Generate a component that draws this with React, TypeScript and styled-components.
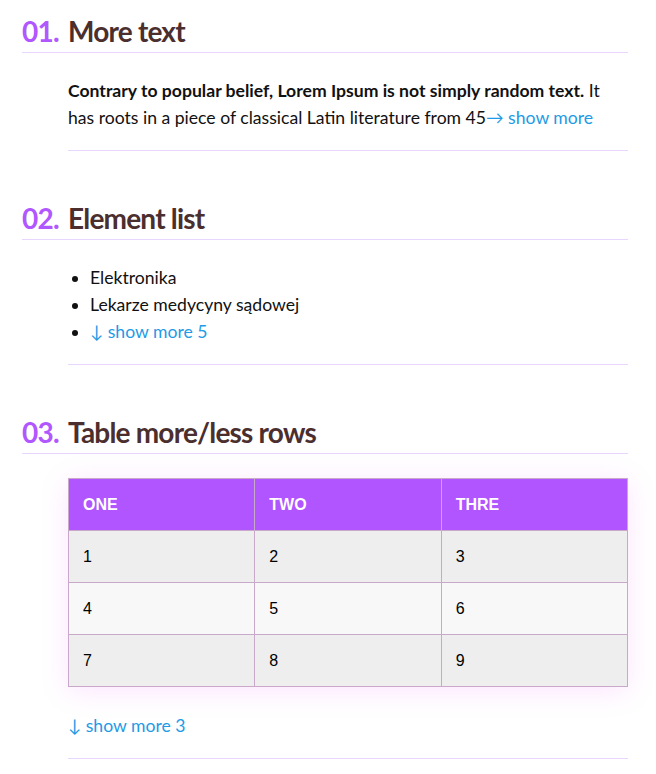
import React from "react";
import styled, { createGlobalStyle } from "styled-components";

const Global = createGlobalStyle`
  html, body { margin: 0; padding: 0; background: #fff; }
  body { font-family: Lato, "Open Sans", sans-serif; color: #111; }
`;

const Page = styled.div`
  padding: 13px 28px 40px 22px;
`;

const Section = styled.section<{ $first?: boolean }>`
  margin-top: ${(p) => (p.$first ? "0" : "49px")};
`;

const Heading = styled.h2`
  display: flex;
  margin: 0;
  padding-bottom: 3px;
  border-bottom: 1px solid #e8d6ff;
  font-family: Lato, sans-serif;
  font-size: 28px;
  line-height: 36px;
  font-weight: 700;
  letter-spacing: -0.8px;
  color: #4b2e2e;
`;

const Num = styled.span`
  width: 46px;
  flex: none;
  color: #b057ff;
`;

const Body = styled.div`
  margin-left: 46px;
  margin-top: 24px;
  padding-bottom: 19px;
  border-bottom: 1px solid #e8d6ff;
  font-size: 17.6px;
  line-height: 27px;
`;

const Para = styled.p`
  margin: 0;
`;

const Link = styled.a`
  color: #1e9be6;
  text-decoration: none;
  cursor: pointer;
`;

const List = styled.ul`
  margin: 0;
  padding-left: 22px;
`;

const TableWrap = styled.div`
  box-shadow: 0 4px 26px rgba(240, 120, 255, 0.2);
  margin-bottom: 25px;
`;

const Table = styled.table`
  width: 100%;
  border-collapse: collapse;
  table-layout: fixed;
  font-family: Arial, "Liberation Sans", sans-serif;
  font-size: 16px;
`;

const Th = styled.th`
  background: #b055ff;
  color: #fff;
  text-align: left;
  font-weight: 700;
  height: 51px;
  padding: 0 14px;
  border: 1px solid #c9a9c9;
`;

const Tr = styled.tr<{ $alt?: boolean }>`
  background: ${(p) => (p.$alt ? "#f8f8f8" : "#eeeeee")};
`;

const Td = styled.td`
  height: 51px;
  padding: 0 14px;
  color: #000;
  border: 1px solid #c9a9c9;
`;

const rows = [
  ["1", "2", "3"],
  ["4", "5", "6"],
  ["7", "8", "9"],
];

export default function App() {
  return (
    <Page>
      <Global />
      <Section $first>
        <Heading>
          <Num>01.</Num>More text
        </Heading>
        <Body>
          <Para>
            <strong>Contrary to popular belief, Lorem Ipsum is not simply random text.</strong> It has
            roots in a piece of classical Latin literature from 45<Link>→ show more</Link>
          </Para>
        </Body>
      </Section>
      <Section>
        <Heading>
          <Num>02.</Num>Element list
        </Heading>
        <Body>
          <List>
            <li>Elektronika</li>
            <li>Lekarze medycyny sądowej</li>
            <li>
              <Link>↓ show more 5</Link>
            </li>
          </List>
        </Body>
      </Section>
      <Section>
        <Heading>
          <Num>03.</Num>Table more/less rows
        </Heading>
        <Body>
          <TableWrap>
            <Table>
              <thead>
                <tr>
                  <Th>ONE</Th>
                  <Th>TWO</Th>
                  <Th>THRE</Th>
                </tr>
              </thead>
              <tbody>
                {rows.map((r, i) => (
                  <Tr key={i} $alt={i % 2 === 1}>
                    {r.map((c) => (
                      <Td key={c}>{c}</Td>
                    ))}
                  </Tr>
                ))}
              </tbody>
            </Table>
          </TableWrap>
          <Link>↓ show more 3</Link>
        </Body>
      </Section>
    </Page>
  );
}
